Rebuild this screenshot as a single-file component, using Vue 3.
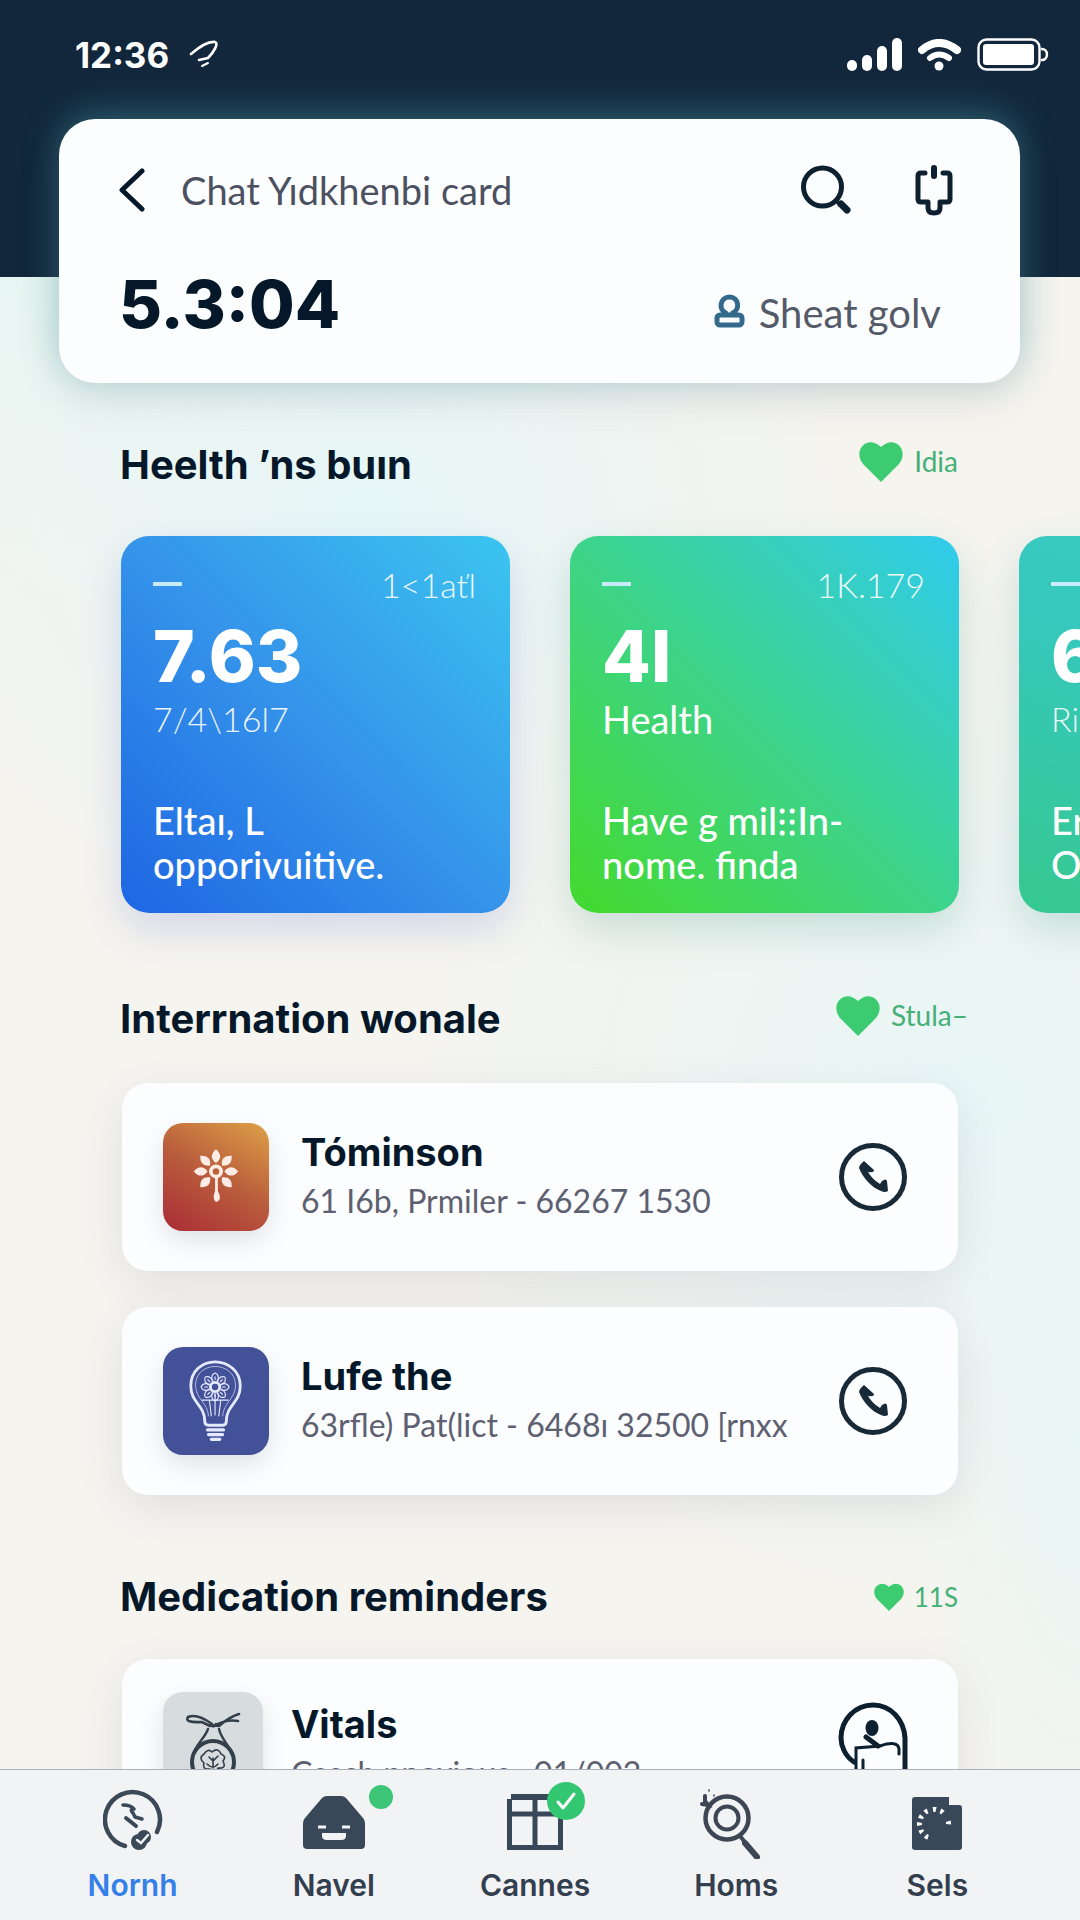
<script setup>
const metrics = [
  { tone: 'blue', tag: '1<1aťl', value: '7.63', unit: '7/4\\16l7', note: ['Eltaı, L', 'opporivuitive.'], thin: true },
  { tone: 'green', tag: '1K.179', value: '4I', unit: 'Health', note: ['Have g mil⁝⁝In-', 'nome. finda'] },
  { tone: 'teal', tag: '', value: '6', unit: 'Ri', note: ['Er', 'O'], thin: true },
]
const contacts = [
  { art: 'flower', name: 'Tóminson', detail: '61 I6b, Prmiler - 66267 1530' },
  { art: 'bulb', name: 'Lufe the', detail: '63rfle) Pat(lict - 6468ı 32500 [rnxx' },
]
const petals = [0, 45, 90, 135, 225, 270, 315]
const rays = [0, 45, 90, 135, 180, 225, 270, 315]
const ticks = [-150, -120, -90, -62, -32, 2, 32, 85]
</script>

<template>
  <div class="app">
    <div class="scroll">
      <header class="top">
        <div class="status">
          <span class="clock">12:36</span>
          <svg class="loc" width="30" height="30" viewBox="0 0 30 30" fill="none" stroke="#fff" stroke-width="2.6" stroke-linecap="round" stroke-linejoin="round">
            <path d="M2 14C9 8 19 1 26 2c4 1-1 10-7 16l-9 2" /><path d="M13 26l6-3" stroke-width="2" />
          </svg>
          <svg class="signal" width="55" height="34" viewBox="0 0 55 34" fill="#fff">
            <rect x="0" y="22" width="10" height="11" rx="5" /><rect x="15" y="17" width="10" height="16" rx="5" />
            <rect x="30" y="8" width="10" height="25" rx="5" /><rect x="45" y="0" width="10" height="33" rx="5" />
          </svg>
          <svg class="wifi" width="43" height="32" viewBox="0 0 43 32" fill="none" stroke="#fff" stroke-linecap="round">
            <path d="M4 11Q21-3 39 11" stroke-width="8" /><path d="M12 19q9-7 19 0" stroke-width="6" />
            <circle cx="21" cy="27" r="4.5" fill="#fff" stroke="none" />
          </svg>
          <svg class="battery" width="72" height="33" viewBox="0 0 72 33" fill="none" stroke="#fff" stroke-width="2.400">
            <rect x="1.500" y="1.500" width="61" height="30" rx="8" /><path d="M64 11c8-1 8 12 0 11" />
            <rect x="6" y="6" width="51" height="21" rx="3" fill="#fff" stroke="none" />
          </svg>
        </div>
        <div class="hero">
          <div class="hero-row">
            <button class="icon-btn" aria-label="Back">
              <svg width="26" height="46" viewBox="0 0 26 46" fill="none" stroke="#04182a" stroke-width="5" stroke-linecap="round" stroke-linejoin="round"><path d="M23 4L3 23l20 19" /></svg>
            </button>
            <span class="hero-title">Chat Yıdkhenbi card</span>
            <button class="icon-btn search" aria-label="Search">
              <svg width="50" height="50" viewBox="0 0 50 50" fill="none" stroke="#0d2030" stroke-linecap="round"><circle cx="21.500" cy="22" r="19" stroke-width="5" /><path d="M35 35l4 5" stroke-width="4" /><path d="M40 39l6 6" stroke-width="7" /></svg>
            </button>
            <button class="icon-btn" aria-label="Scan">
              <svg width="38" height="52" viewBox="0 0 38 52" fill="none" stroke="#0d2030" stroke-width="5" stroke-linecap="round" stroke-linejoin="round"><path d="M10 9H6q-3 0-3 3v23q0 3 3 3h7v6q0 5 6 5t6-5v-6h7q3 0 3-3V12q0-3-3-3h-4" /><path d="M19 4v8" stroke-width="6" /></svg>
            </button>
          </div>
          <div class="hero-row figures">
            <strong class="figure">5.3:04</strong>
            <span class="goal">
              <svg width="31" height="34" viewBox="0 0 31 34" fill="none" stroke="#33698a" stroke-width="5" stroke-linejoin="round"><path d="M12 22v-3C4 16 6 3 15.500 3s11 13 3 16v3" /><rect x="3" y="21" width="25" height="10" rx="3" /></svg>
              Sheat golv
            </span>
          </div>
        </div>
      </header>

      <main>
        <section class="first">
          <div class="head">
            <h2>Heelth ’ns buın</h2>
            <a href="#health" class="more">
              <svg width="44" height="41" viewBox="0 0 44 41" fill="#3dcb71"><path d="M22 41L4 23C-7 9 9-7 22 6 35-7 51 9 40 23z" /></svg>
              Idia
            </a>
          </div>
          <div class="carousel">
            <article v-for="m in metrics" :key="m.tone" class="metric" :class="[m.tone, { thin: m.thin }]">
              <div class="metric-top"><i class="dash"></i><span class="tag">{{ m.tag }}</span></div>
              <strong class="value">{{ m.value }}</strong>
              <span class="unit">{{ m.unit }}</span>
              <p class="note">{{ m.note[0] }}<br />{{ m.note[1] }}</p>
            </article>
          </div>
        </section>

        <section>
          <div class="head">
            <h2>Interrnation wonale</h2>
            <a href="#contacts" class="more wide">
              <svg width="44" height="41" viewBox="0 0 44 41" fill="#3dcb71"><path d="M22 41L4 23C-7 9 9-7 22 6 35-7 51 9 40 23z" /></svg>
              Stula–
            </a>
          </div>
          <div class="list">
            <article v-for="c in contacts" :key="c.name" class="row">
              <div class="thumb" :class="c.art">
                <svg v-if="c.art === 'flower'" width="52" height="56" viewBox="-28 -24 56 60" fill="#fdebe4">
                  <path v-for="p in petals" :key="p" :transform="`rotate(${p})`" d="M0-24q9 8 0 15-9-7 0-15z" />
                  <circle r="5.500" fill="none" stroke="#fdebe4" stroke-width="4" />
                  <path d="M-1 7h3v14q5 9-1 12-6-2-2-12z" />
                </svg>
                <svg v-else width="56" height="84" viewBox="0 0 60 88" fill="none" stroke="#e6eaff" stroke-linecap="round" stroke-linejoin="round">
                  <path d="M18 66c0-18-15-20-15-38C3 12 15 2 29 2s27 10 27 26c0 18-15 20-15 38q0 4-4 4H22q-4 0-4-4z" stroke-width="3" />
                  <path d="M22 60C21 46 9 42 8 28 8 14 18 7 29 7s22 7 22 21c-1 14-13 18-14 32" stroke-width="1" opacity=".7" />
                  <g transform="translate(29 29)"><circle r="5" stroke-width="3" /><path v-for="r in rays" :key="r" :transform="`rotate(${r})`" d="M-3-6q-2-7 3-9 5 2 3 9M0-8v-3" stroke-width="1.200" /></g>
                  <path d="M29 36v23M23 44l2 16M35 44l-2 16M15 43h28" stroke-width="1.200" />
                  <path d="M21 75h17M22 80h15M25 85h9" stroke-width="3.500" />
                </svg>
              </div>
              <div class="info"><h3>{{ c.name }}</h3><p>{{ c.detail }}</p></div>
              <button class="icon-btn" :aria-label="`Call ${c.name}`">
                <svg width="70" height="70" viewBox="0 0 70 70"><circle cx="35" cy="35" r="31.500" fill="none" stroke="#182a38" stroke-width="5" /><path d="M26 19l10 9q0 3-6 2 4 7 12 12l2-3q4-3 5 0l1 10q-3 2-7 0C33 45 25 36 21 26q0-3 5-7z" fill="#182a38" /></svg>
              </button>
            </article>
          </div>
        </section>

        <section class="meds">
          <div class="head">
            <h2>Medication reminders</h2>
            <a href="#meds" class="more small">
              <svg width="32" height="28" viewBox="0 0 44 41" fill="#3dcb71"><path d="M22 41L4 23C-7 9 9-7 22 6 35-7 51 9 40 23z" /></svg>
              11S
            </a>
          </div>
          <div class="list">
            <article class="row vitals">
              <div class="thumb medal">
                <svg width="56" height="84" viewBox="0 0 56 84" fill="none" stroke="#333f49" stroke-linecap="round">
                  <path d="M27 12Q12 1 3 5q-4 6 14 5l8 4M25 13l9 1Q44 5 54 2M29 14q12-7 24-5M26 12q2 5 5 0" stroke-width="2.600" />
                  <path d="M23 17c-3 9-12 15-15 26M34 17c2 10 10 15 13 26" stroke-width="2.400" />
                  <circle cx="28" cy="50" r="21" stroke-width="4" />
                  <path d="M19 42q4-6 8-2 6-5 9 2 6 2 2 7 4 8-5 7-4 8-8 1-8 1-6-6-6-5 0-9zM24 45l4 4 5-5M22 52q6 6 11 0M28 46v10" stroke-width="1.600" />
                </svg>
              </div>
              <div class="info"><h3>Vitals</h3><p>Casch pnoxious . 01/002-</p></div>
              <button class="icon-btn" aria-label="Open reader">
                <svg width="70" height="76" viewBox="0 0 70 76" fill="none" stroke="#0d2030" stroke-linecap="round"><path d="M16 60C7 54 3 44 3 36 3 18 17 3 35 3s31 15 32 33v40" stroke-width="5" /><ellipse cx="34" cy="26" rx="6.500" ry="8" fill="#0d2030" stroke="none" /><path d="M28 35l12 9" stroke-width="5" /><path d="M18 76V46l24-2q18-6 19 3v5M18 46v17M25 58v18" stroke-width="3" /></svg>
              </button>
            </article>
          </div>
        </section>
      </main>
    </div>

    <nav class="tabs">
      <a href="#nornh" class="active">
        <span class="glyph">
          <svg width="60" height="62" viewBox="0 0 60 62" fill="none" stroke="#3b4858" stroke-linecap="round"><path d="M22 57A27.500 27.500 0 1 1 54 43" stroke-width="4.500" /><path d="M20 16q8 0 11 4-5 0-1 4l2 4 7 2" stroke-width="3.500" stroke-linejoin="round" /><path d="M23 29l10 8" stroke-width="4" /><circle cx="36" cy="53" r="8" fill="#3b4858" stroke="none" /><circle cx="41" cy="48" r="7" fill="#3b4858" stroke="none" /><path d="M34 51l4 3 7-8" stroke="#f1f3f5" stroke-width="2.500" /></svg>
        </span>Nornh
      </a>
      <a href="#navel">
        <span class="glyph">
          <svg width="62" height="62" viewBox="0 0 62 62" fill="#394858"><path d="M24 7h14q3 0 5 2l17 20q2 2 2 5v22q0 4-4 4H4q-4 0-4-4V34q0-3 2-5L19 9q2-2 5-2z" /><path d="M15 38h8M39 38h8" stroke="#f1f3f5" stroke-width="3" /><path d="M19 44h24v3q0 4-5 4H24q-5 0-5-4z" fill="#f1f3f5" /></svg>
          <i class="dot"></i>
        </span>Navel
      </a>
      <a href="#cannes">
        <span class="glyph">
          <svg width="56" height="62" viewBox="0 0 56 62" fill="none" stroke="#394858" stroke-width="5"><path d="M4 8h46" stroke-width="6" /><path d="M2 25h52M28 8v50M2.500 10v48.500h51V8" /></svg>
          <i class="check"><svg width="22" height="20" viewBox="0 0 22 20" fill="none" stroke="#fff" stroke-width="3" stroke-linecap="round" stroke-linejoin="round"><path d="M3 11l5 6L19 3" /></svg></i>
        </span>Cannes
      </a>
      <a href="#homs">
        <span class="glyph">
          <svg width="74" height="70" viewBox="0 0 74 70" fill="none" stroke="#3d4655" stroke-linecap="round"><circle cx="28" cy="29" r="21.500" stroke-width="4.500" /><circle cx="28" cy="29" r="11.500" stroke-width="4" /><path d="M41 47l4 5" stroke-width="4" /><path d="M46 54l12 14" stroke-width="6" /><path d="M3 15l6 1-3-4V7" stroke-width="4" /><path d="M10 1v1M15 6v1" stroke-width="1.500" /></svg>
        </span>Homs
      </a>
      <a href="#sels">
        <span class="glyph">
          <svg width="50" height="62" viewBox="0 0 50 62" fill="#394858"><path d="M3 8h34v8h10q3 0 3 3v39q0 3-3 3H3q-3 0-3-3V11q0-3 3-3z" /><path v-for="t in ticks" :key="t" :transform="`translate(22 35) rotate(${t})`" d="M-2-17h4l-1 5h-2z" fill="#fff" /></svg>
        </span>Sels
      </a>
    </nav>
  </div>
</template>

<style>
body { margin: 0; }
</style>

<style scoped>
* { box-sizing: border-box; }
.app {
  height: 100vh;
  display: flex;
  flex-direction: column;
  overflow: hidden;
  font-family: Lato, "Liberation Sans", sans-serif;
  color: #04182a;
  background:
    radial-gradient(ellipse 480px 420px at 34% 27%, #e6f6f7 0%, #e6f6f700 100%),
    radial-gradient(ellipse 340px 420px at 0% 10%, #e4f6f2 0%, #e4f6f200 100%),
    radial-gradient(ellipse 560px 520px at 90% 57%, #e8f6f6 0%, #e8f6f600 100%),
    radial-gradient(ellipse 160px 460px at 100% 75%, #e8f6f4 0%, #e8f6f400 100%),
    #f5f4ef;
}
.scroll { flex: 1; min-height: 0; overflow: hidden auto; scrollbar-width: none; }
h2, h3, p { margin: 0; }
svg { display: block; flex: none; }
a { color: inherit; text-decoration: none; }
.icon-btn { border: 0; padding: 0; background: none; cursor: pointer; flex: none; }
.top { background: linear-gradient(#12273c, #12273c) no-repeat top / 100% 277px; }
.status { display: flex; align-items: center; height: 119px; padding: 0 31px 10px 75px; }
.clock { font: 700 35px/44px Inter, sans-serif; color: #fff; }
.loc { margin-left: 20px; }
.signal { margin-left: auto; }
.wifi { margin-left: 16px; }
.battery { margin-left: 16px; }
.hero {
  margin: 0 60px 0 59px;
  padding: 45px 67px 44px 60px;
  border-radius: 36px;
  background: #fcfdfe;
  box-shadow: 0 -8px 34px rgba(72, 160, 170, .42), 0 16px 44px rgba(70, 85, 90, .12);
}
.hero-row { display: flex; align-items: center; }
.hero-title { margin-left: 36px; font-size: 38px; line-height: 48px; color: #4c5161; }
.search { margin: 0 64px 0 auto; }
.figures { align-items: baseline; justify-content: space-between; margin-top: 53px; padding-right: 12px; }
.figure { font: 800 66px/70px Inter, sans-serif; }
.goal { display: flex; align-items: baseline; gap: 14px; font-size: 40px; line-height: 50px; color: #555a68; }
section { padding: 0 122px 0 120px; margin-top: 82px; }
.first { margin-top: 58px; }
.meds { margin-top: 78px; }
.head { display: flex; align-items: center; justify-content: space-between; height: 48px; margin-bottom: 40px; }
.first .head { margin-bottom: 47px; }
.meds .head { margin-bottom: 38px; }
h2 { font: 700 40px/48px Inter, sans-serif; }
.more { display: flex; align-items: center; gap: 11px; padding-bottom: 8px; font-size: 28px; line-height: 30px; color: #45b077; }
.more.wide { margin-right: -10px; }
.more.small { gap: 9px; padding-bottom: 0; font-size: 26px; }
.carousel {
  display: flex;
  gap: 60px;
  margin: -40px -122px -70px -120px;
  padding: 40px 120px 70px 121px;
  overflow: auto hidden;
  scrollbar-width: none;
}
.metric {
  flex: 0 0 389px;
  height: 377px;
  padding: 25px 34px 0 32px;
  border-radius: 28px;
  display: flex;
  flex-direction: column;
  color: #fff;
}
.blue { background: linear-gradient(45deg, #1e66e3, #3594ea 50%, #3bc5f0); box-shadow: 0 16px 40px rgba(80, 100, 200, .2); }
.green { background: linear-gradient(45deg, #43d935 5%, #3dd48c 50%, #30cbee); box-shadow: 0 16px 40px rgba(60, 140, 120, .22); }
.teal { background: linear-gradient(20deg, #36c88f, #36c8bd 60%, #3acdc4); box-shadow: 0 16px 40px rgba(60, 140, 140, .22); }
.metric-top { display: flex; align-items: center; justify-content: space-between; height: 46px; font-size: 34px; font-weight: 300; }
.dash { width: 29px; height: 4px; background: #c8eafa; }
.tag { opacity: .9; }
.value { margin-top: 12px; font: 800 71px/74px Inter, sans-serif; }
.unit { margin-top: 4px; font-size: 38px; line-height: 44px; }
.thin .unit { font-size: 34px; font-weight: 300; opacity: .9; }
.note { margin-top: auto; padding-bottom: 27px; font-size: 38px; line-height: 44px; font-weight: 500; }
.list { display: flex; flex-direction: column; gap: 36px; margin-left: 2px; }
.row {
  display: flex;
  align-items: center;
  height: 188px;
  padding: 0 50px 0 41px;
  border-radius: 26px;
  background: #fcfdfe;
  box-shadow: 0 12px 44px rgba(80, 80, 110, .12);
}
.thumb { display: flex; align-items: center; justify-content: center; width: 106px; height: 108px; border-radius: 20px; box-shadow: 0 10px 24px rgba(60, 70, 100, .14); }
.flower { background: linear-gradient(30deg, #aa2c36, #b95d3c 50%, #dda047); }
.bulb { background: #435199; }
.medal { width: 100px; height: 112px; background: #d7dcdf; align-items: flex-start; padding-top: 20px; }
.info { flex: 1; min-width: 0; margin-left: 32px; }
h3 { font: 700 38px/48px Inter, sans-serif; }
.info p { font-size: 32px; line-height: 50px; color: #5c6070; white-space: nowrap; }
.vitals { align-items: flex-start; padding-top: 33px; }
.vitals .info { margin-left: 28px; margin-top: 8px; }
.vitals .icon-btn { margin-top: 10px; }
.tabs { display: flex; height: 151px; padding: 19px 42px 0 32px; border-top: 1px solid #a9b0bb; background: #f1f3f5; }
.tabs a { flex: 1; display: flex; flex-direction: column; align-items: center; font: 600 30px/40px Inter, sans-serif; color: #333e4e; }
.tabs .active { color: #3580e8; }
.glyph { position: relative; height: 76px; }
.dot { position: absolute; top: -4px; right: -28px; width: 24px; height: 24px; border-radius: 50%; background: #3cc576; }
.check { position: absolute; top: -7px; right: -22px; display: flex; align-items: center; justify-content: center; width: 38px; height: 38px; border-radius: 50%; background: #33c772; }
</style>
